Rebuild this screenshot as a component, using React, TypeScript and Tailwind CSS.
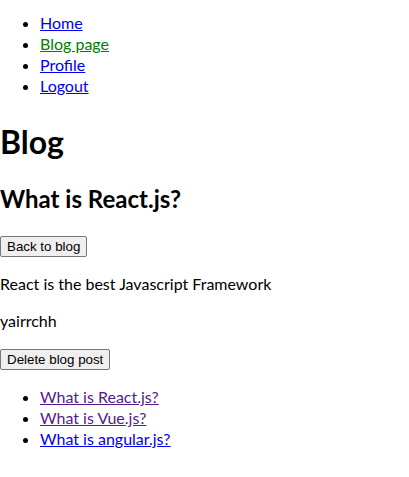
const font = "font-['Segoe_UI',Lato,sans-serif]";

export default function App() {
  const nav = [
    { label: "Home", color: "text-[#0000ee]" },
    { label: "Blog page", color: "text-[#008000]" },
    { label: "Profile", color: "text-[#0000ee]" },
    { label: "Logout", color: "text-[#0000ee]" },
  ];
  const posts = [
    { label: "What is React.js?", color: "text-[#551a8b]" },
    { label: "What is Vue.js?", color: "text-[#551a8b]" },
    { label: "What is angular.js?", color: "text-[#0000ee]" },
  ];
  const btn =
    "block h-[21px] rounded-[2px] border border-[#767676] bg-[#efefef] px-[6px] font-['Liberation_Sans',Arial,sans-serif] text-[13.33px] leading-[17px] text-black";

  return (
    <div className={`${font} min-h-[477px] bg-white text-[16px] leading-[21px] text-black`}>
      <ul className="mt-3 list-disc pl-10">
        {nav.map((n) => (
          <li key={n.label}>
            <a href="#" className={`${n.color} underline`}>
              {n.label}
            </a>
          </li>
        ))}
      </ul>
      <h1 className="mt-[24px] text-[32px] font-bold leading-[43px]">Blog</h1>
      <h2 className="mt-[20px] text-[24px] font-bold leading-[32px]">What is React.js?</h2>
      <button className={`${btn} mt-[21px]`}>Back to blog</button>
      <p className="mt-4">React is the best Javascript Framework</p>
      <p className="mt-4">yairrchh</p>
      <button className={`${btn} mt-[18px]`}>Delete blog post</button>
      <ul className="mt-4 list-disc pl-10">
        {posts.map((n) => (
          <li key={n.label}>
            <a href="#" className={`${n.color} underline`}>
              {n.label}
            </a>
          </li>
        ))}
      </ul>
    </div>
  );
}
